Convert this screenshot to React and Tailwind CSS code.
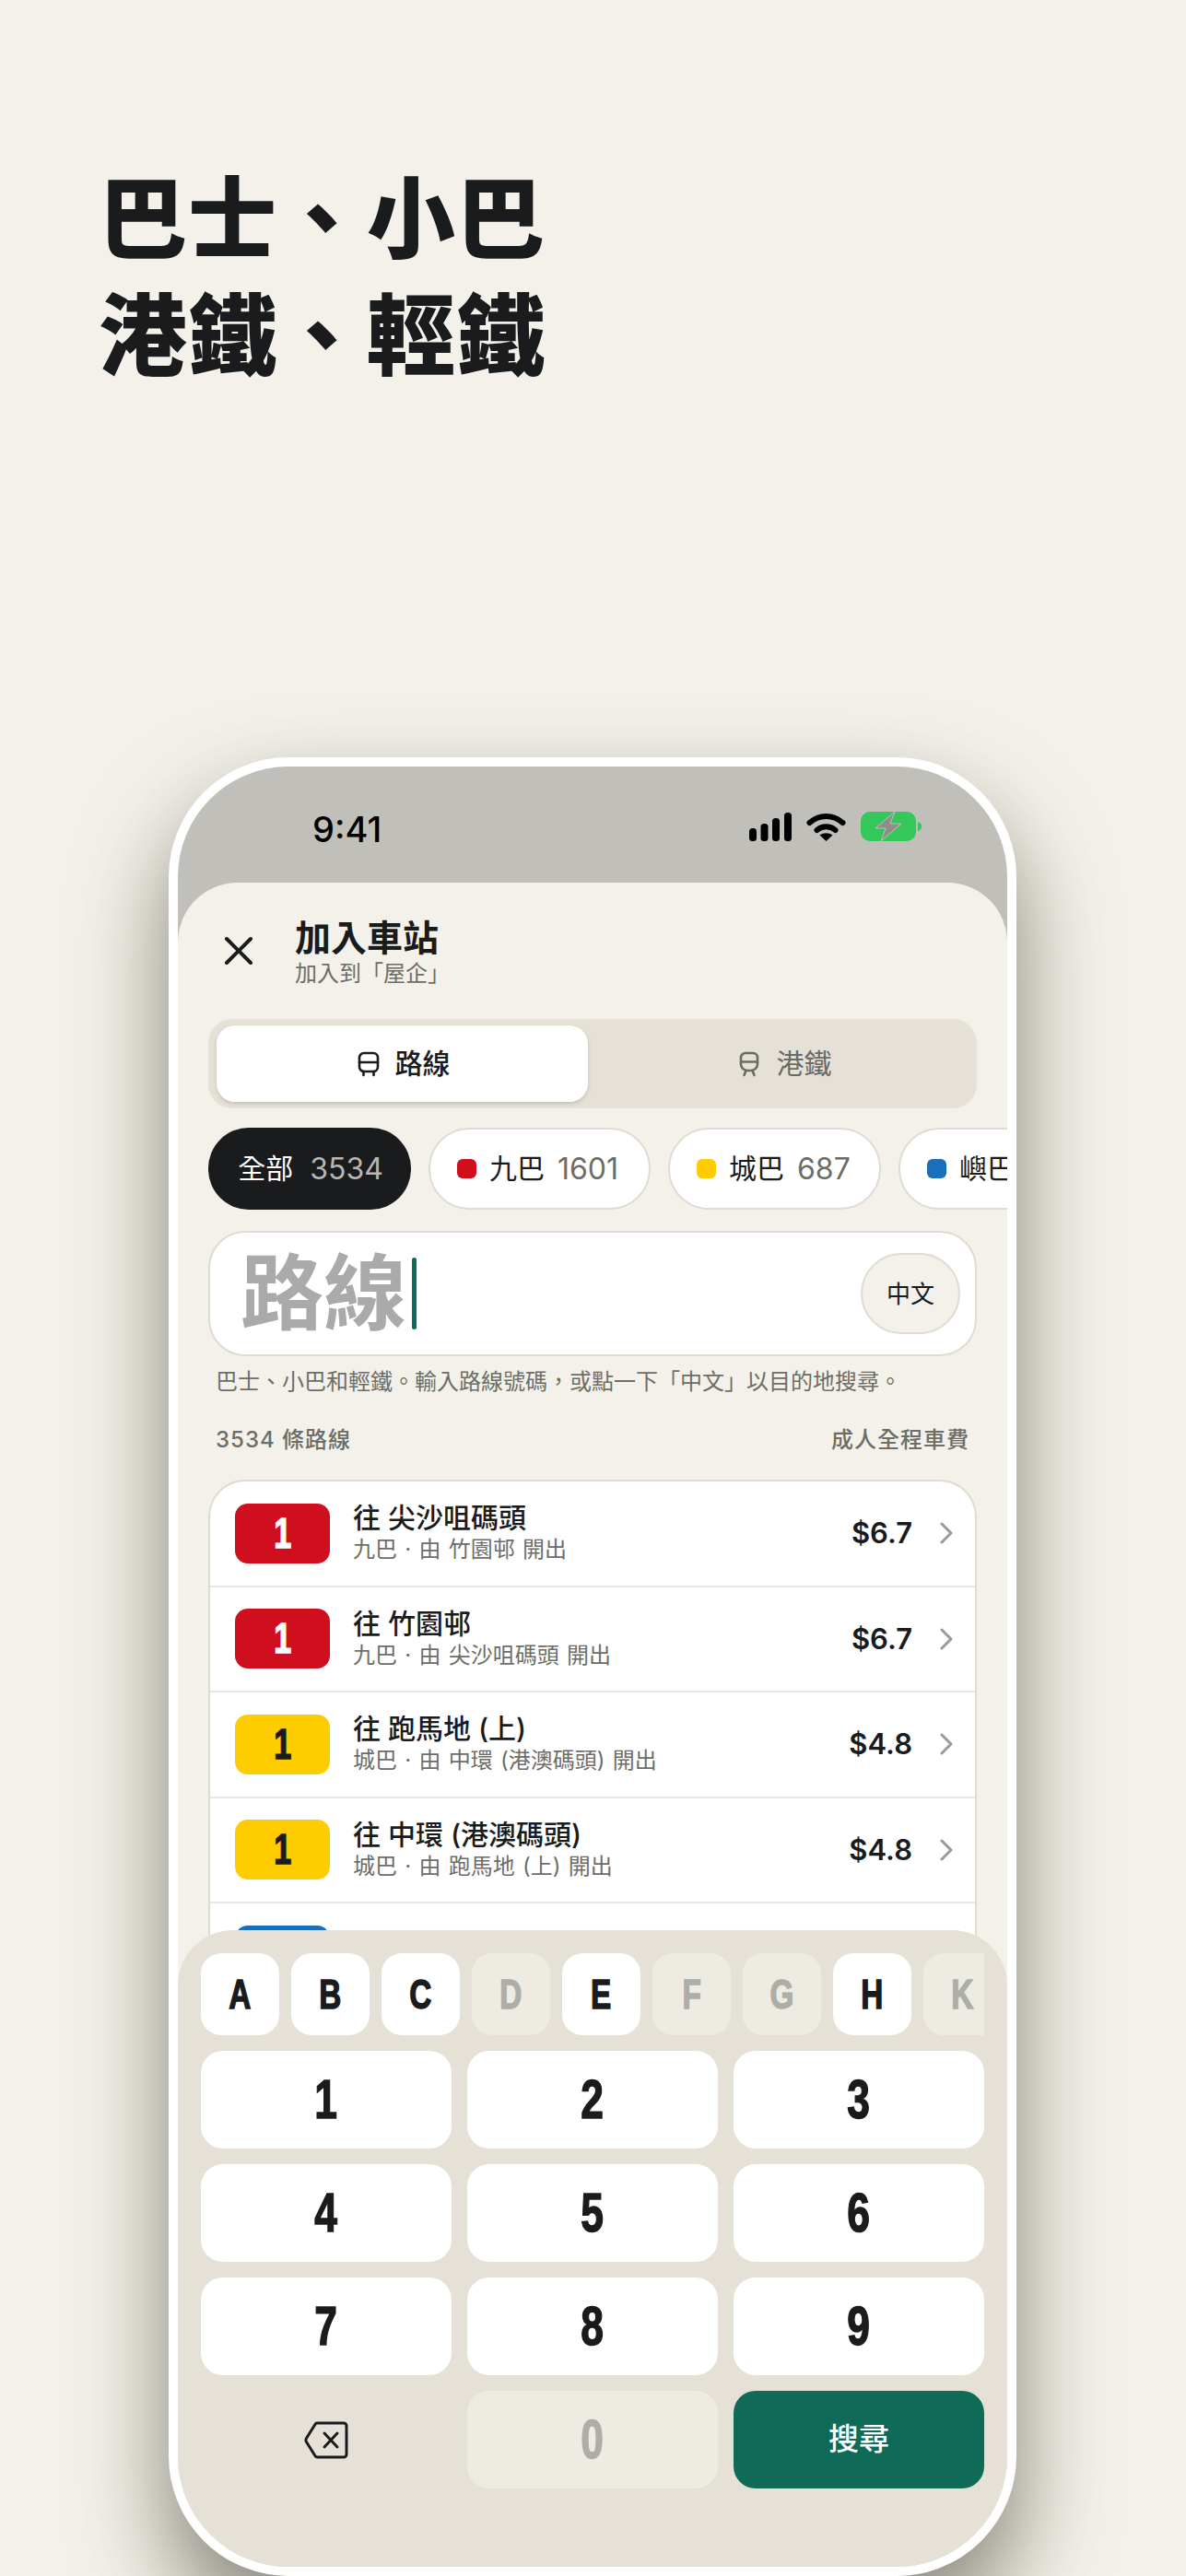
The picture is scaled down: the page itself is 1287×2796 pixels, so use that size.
import React from 'react'

const PILLS = [
  { name: '九巴', count: '1601', dot: 'bg-[#cf0f1e]', width: 'w-[241px]' },
  { name: '城巴', count: '687', dot: 'bg-[#fecc00]', width: 'w-[231px]' },
  { name: '嶼巴', count: '', dot: 'bg-[#1a6fb8]', width: 'w-[230px]' },
]

const ROUTES = [
  { color: 'bg-[#cf0f1e] text-white', title: '往 尖沙咀碼頭', sub: '九巴 · 由 竹園邨 開出', price: '$6.7' },
  { color: 'bg-[#cf0f1e] text-white', title: '往 竹園邨', sub: '九巴 · 由 尖沙咀碼頭 開出', price: '$6.7' },
  { color: 'bg-[#fecc00] text-[#1a1b1d]', title: '往 跑馬地 (上)', sub: '城巴 · 由 中環 (港澳碼頭) 開出', price: '$4.8' },
  { color: 'bg-[#fecc00] text-[#1a1b1d]', title: '往 中環 (港澳碼頭)', sub: '城巴 · 由 跑馬地 (上) 開出', price: '$4.8' },
  { color: 'bg-[#1a6fb8] text-white', title: '往 大澳' },
]

const LETTERS = [
  ['A', true], ['B', true], ['C', true], ['D', false], ['E', true],
  ['F', false], ['G', false], ['H', true], ['K', false],
]

const HELP_TEXT = '巴士、小巴和輕鐵。輸入路線號碼\uFF0C或點一下「中文」以目的地搜尋。'

const NARROW = "inline-block scale-x-[0.74] font-['Liberation_Sans',sans-serif] font-bold [-webkit-text-stroke:1.5px_currentColor]"

const BusIcon = ({ className }) => (
  <svg viewBox="0 0 24 28" fill="none" stroke="currentColor" strokeWidth="2.6" strokeLinecap="round" strokeLinejoin="round" className={className}>
    <rect x="2" y="2" width="20" height="20" rx="5" />
    <path d="M2 12h20M6.500 22v4M17.500 22v4" />
  </svg>
)

const TrainIcon = ({ className }) => (
  <svg viewBox="0 0 24 28" fill="none" stroke="currentColor" strokeWidth="2.6" strokeLinecap="round" strokeLinejoin="round" className={className}>
    <path d="M8 2h8a5 5 0 0 1 5 5v7a7 7 0 0 1-7 7h-4a7 7 0 0 1-7-7V7a5 5 0 0 1 5-5z" />
    <path d="M3 11.500h18M8.500 21l-2 5M15.500 21l2 5" />
  </svg>
)

const StatusIcons = () => (
  <div className="flex items-center gap-[16px]">
    <svg width="46" height="31" viewBox="0 0 46 31" fill="#000">
      <rect x="0" y="17" width="8" height="14" rx="3.500" />
      <rect x="12.500" y="12" width="8" height="19" rx="3.500" />
      <rect x="25" y="6" width="8" height="25" rx="3.500" />
      <rect x="38" y="0" width="8" height="31" rx="3.500" />
    </svg>
    <svg width="43" height="31" viewBox="0 0 43 31" fill="none" stroke="#000" strokeWidth="6" strokeLinecap="round">
      <path d="M3.500 11C14 1.500 29 1.500 39.500 11" />
      <path d="M11.500 19c6-5 14-5 20 0" />
      <path d="M21.500 31l-7-6.500c4-3 10-3 14 0z" fill="#000" stroke="none" />
    </svg>
    <svg width="66" height="32" viewBox="0 0 66 32">
      <rect x="0" y="0" width="60" height="32" rx="10" fill="#34c759" />
      <path d="M62 11c2.500.5 4 2.500 4 5s-1.500 4.500-4 5z" fill="#34c759" />
      <path d="M37 0L16 18h11l-5 14 22-19H32z" fill="#8e8e8a" stroke="#c0bfb9" strokeWidth="1" />
    </svg>
  </div>
)

const RouteRow = ({ route }) => (
  <div className="flex h-[114.5px] shrink-0 items-center border-b-2 border-[#e9e6de] pl-[27px] pr-[24px]">
    <div className={`flex h-[65px] w-[103px] shrink-0 items-center justify-center rounded-[14px] text-[46px] ${route.color}`}>
      <span className={NARROW}>1</span>
    </div>
    <div className="ml-[25px] flex-1">
      <p className="h-[36px] text-[30px] font-medium leading-[36px] text-[#1a1b1d]">{route.title}</p>
      {route.sub && <p className="h-[34px] text-[24px] leading-[34px] text-[#6d6d68] [word-spacing:1.5px]">{route.sub}</p>}
    </div>
    {route.price && (
      <>
        <span className="text-[31px] font-semibold text-[#1a1b1d]">{route.price}</span>
        <svg width="14" height="24" viewBox="0 0 14 24" fill="none" stroke="#9a9a96" strokeWidth="3" strokeLinecap="round" strokeLinejoin="round" className="ml-[30px]">
          <path d="M2 2l10 10L2 22" />
        </svg>
      </>
    )}
  </div>
)

const NumKey = ({ children }) => (
  <div className="flex h-[106px] items-center justify-center rounded-[24px] bg-white text-[60px] text-[#1a1b1d]">
    <span className={NARROW}>{children}</span>
  </div>
)

const Keyboard = () => (
  <div className="absolute inset-x-0 bottom-0 h-[691px] rounded-t-[60px] bg-[#e5e1d7] px-[25px] pt-[25px]">
    <div className="flex gap-[13px] overflow-hidden">
      {LETTERS.map(([letter, enabled]) => (
        <div
          key={letter}
          className={`flex h-[89px] w-[85px] shrink-0 items-center justify-center rounded-[22px] text-[45px] ${enabled ? 'bg-white text-[#1a1b1d]' : 'bg-[#eeebe3] text-[#adaea8]'}`}
        >
          <span className={NARROW}>{letter}</span>
        </div>
      ))}
    </div>
    <div className="mt-[17px] grid grid-cols-3 gap-[17px]">
      {[1, 2, 3, 4, 5, 6, 7, 8, 9].map((n) => (
        <NumKey key={n}>{n}</NumKey>
      ))}
      <div className="flex h-[106px] items-center justify-center">
        <svg width="48" height="41" viewBox="0 0 48 41" fill="none" stroke="#1a1b1d" strokeWidth="3" strokeLinecap="round" strokeLinejoin="round">
          <path d="M14 2h29a3 3 0 0 1 3 3v31a3 3 0 0 1-3 3H14a2 2 0 0 1-1.600-.8L2.500 22.500a4 4 0 0 1 0-4L12.400 2.800A2 2 0 0 1 14 2z" />
          <path d="M22 13l14 15M36 13L22 28" />
        </svg>
      </div>
      <div className="flex h-[106px] items-center justify-center rounded-[24px] bg-[#eeebe3] text-[60px] text-[#adaea8]">
        <span className={NARROW}>0</span>
      </div>
      <div className="flex h-[106px] items-center justify-center rounded-[24px] bg-[#0f6b58] text-[33px] font-medium text-white">
        搜尋
      </div>
    </div>
  </div>
)

export default function App() {
  return (
    <div className="h-[2796px] w-[1287px] overflow-hidden bg-[#f3f1e9] font-['Inter','Noto_Sans_CJK_TC',sans-serif]">
      <div className="pl-[107px] pt-[167px] font-['Noto_Sans_CJK_TC',sans-serif] text-[96px] font-black leading-[127px] tracking-[1px] text-[#1a1b1d]">
        <p>巴士、小巴</p>
        <p>港鐵、輕鐵</p>
      </div>

      <div className="ml-[183px] mt-[401px] h-[1974px] w-[920px] rounded-[130px] border-[10px] border-white bg-white shadow-[0_50px_100px_rgba(60,58,45,0.6)]">
        <div className="relative flex h-full flex-col overflow-hidden rounded-[120px] bg-[#c0bfb9]">
          {/* Status bar */}
          <div className="flex h-[126px] shrink-0 items-start justify-between pl-[146px] pr-[93px] pt-[49px]">
            <span className="text-[38px] font-medium leading-[38px] text-black">9:41</span>
            <StatusIcons />
          </div>

          {/* Sheet */}
          <div className="flex-1 overflow-hidden rounded-t-[65px] bg-[#f3f1e9] px-[33px] pt-[38px]">
            <div className="flex items-center pl-[17px]">
              <svg width="32" height="32" viewBox="0 0 32 32" fill="none" stroke="#1a1b1d" strokeWidth="4" strokeLinecap="round" className="mb-[6px]">
                <path d="M3 3l26 26M29 3L3 29" />
              </svg>
              <div className="ml-[45px]">
                <p className="h-[44px] text-[39px] font-bold leading-[44px] text-[#1a1b1d]">加入車站</p>
                <p className="h-[34px] text-[24px] leading-[34px] text-[#6d6d68]">加入到「屋企」</p>
              </div>
            </div>

            {/* Tabs */}
            <div className="mt-[32px] flex h-[97px] items-center rounded-[26px] bg-[#e5e1d7] px-[9px]">
              <div className="flex h-[83px] w-[403px] items-center justify-center gap-[17px] rounded-[20px] bg-white pl-[3px] text-[30px] font-medium text-[#1a1b1d] shadow-[0_2px_4px_rgba(0,0,0,0.15)]">
                <BusIcon className="h-[28px] w-[24px]" />
                路線
              </div>
              <div className="flex flex-1 items-center justify-center gap-[18px] pl-[14px] text-[30px] text-[#6b6b66]">
                <TrainIcon className="h-[28px] w-[24px]" />
                港鐵
              </div>
            </div>

            {/* Filter pills */}
            <div className="mt-[21px] flex h-[89px] gap-[19px]">
              <div className="flex w-[220px] shrink-0 items-center justify-center gap-[18px] rounded-[44px] bg-[#1a1b1d] pl-[2px] text-[30px] text-white">
                全部
                <span className="text-[32px] text-[#b6b6b4]">3534</span>
              </div>
              {PILLS.map((pill) => (
                <div key={pill.name} className={`flex shrink-0 items-center gap-[14px] rounded-[44px] border-2 border-[#dedbd1] bg-white pl-[29px] text-[30px] text-[#1a1b1d] ${pill.width}`}>
                  <span className={`h-[21px] w-[21px] rounded-[6px] ${pill.dot}`} />
                  {pill.name}
                  {pill.count && <span className="text-[32px] text-[#6d6d68]">{pill.count}</span>}
                </div>
              ))}
            </div>

            {/* Search field */}
            <div className="mt-[23px] flex h-[136px] items-center rounded-[40px] border-2 border-[#dedbd1] bg-white pl-[33px] pr-[16px]">
              <span className="text-[90px] font-bold leading-none text-[#a9aba8]">路線</span>
              <span className="ml-[6px] h-[78px] w-[5px] rounded-full bg-[#0f6b58]" />
              <div className="ml-auto flex h-[88px] w-[108px] items-center justify-center rounded-[44px] border-2 border-[#dedbd1] bg-[#f3f1e9] text-[26px] text-[#1a1b1d]">
                中文
              </div>
            </div>

            <p className="mt-[10px] h-[36px] pl-[8px] text-[24px] leading-[36px] text-[#6d6d68]">{HELP_TEXT}</p>

            <div className="mt-[27px] flex h-[36px] items-center justify-between px-[8px] text-[24px] font-medium tracking-[1px] text-[#6d6d68]">
              <span>3534 條路線</span>
              <span>成人全程車費</span>
            </div>

            {/* Route list */}
            <div className="mt-[25px] rounded-t-[40px] border-x-2 border-t-2 border-[#dedbd1] bg-white">
              {ROUTES.map((route) => (
                <RouteRow key={route.title} route={route} />
              ))}
            </div>
          </div>

          <Keyboard />
        </div>
      </div>
    </div>
  )
}
